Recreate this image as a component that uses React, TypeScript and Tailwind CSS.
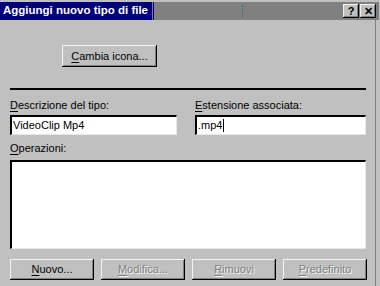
import React from 'react';

const font = { fontFamily: '"Liberation Sans", Arial, sans-serif' };

const raised =
  'bg-[#c0c0c0] shadow-[inset_-1px_-1px_#000,inset_1px_1px_#eef6ee,inset_-2px_-2px_#808080]';

function Btn({
  label,
  hot,
  disabled,
  className = '',
}: {
  label: string;
  hot: number;
  disabled?: boolean;
  className?: string;
}) {
  const before = label.slice(0, hot);
  const key = label[hot];
  const after = label.slice(hot + 1);
  return (
    <div className={`${raised} flex items-center justify-center text-[11px] ${className}`}>
      <span
        className={
          disabled
            ? 'text-[#808080] [text-shadow:1px_1px_0_#f4faf4]'
            : 'text-black'
        }
      >
        {before}
        <span className="underline underline-offset-[2px]">{key}</span>
        {after}
      </span>
    </div>
  );
}

function Label({ text }: { text: string }) {
  return (
    <div className="text-[11px] leading-[13px] text-black">
      <span className="underline underline-offset-[2px]">{text[0]}</span>
      {text.slice(1)}
    </div>
  );
}

export default function App() {
  return (
    <div
      className="w-[380px] h-[286px] bg-[#c0c0c0] flex flex-col overflow-hidden"
      style={font}
    >
      {/* title bar */}
      <div className="pt-[2px] flex pr-[1px]">
        <div className="flex h-[18px] flex-1">
          <div className="bg-[#000080] flex items-center pl-[3px] pr-[3px]">
            <span className="text-white font-bold text-[11.5px] whitespace-nowrap">
              Aggiungi nuovo tipo di file
            </span>
          </div>
          <div className="w-[4px] bg-[repeating-linear-gradient(90deg,#000080_0_1px,#808080_1px_2px)]" />
          <div className="flex-1 bg-[#808080] flex items-center">
            <div className="ml-[87px] h-[12px] border-l border-dotted border-[#008080]" />
            <div className="ml-auto mr-[3px] flex gap-[1px]">
              <div className={`${raised} w-[16px] h-[14px] flex items-center justify-center text-[11px] font-bold leading-none`}>
                ?
              </div>
              <div className={`${raised} w-[16px] h-[14px] flex items-center justify-center text-[11px] font-bold leading-none`}>
                ✕
              </div>
            </div>
          </div>
        </div>
      </div>

      {/* body */}
      <div className="flex flex-1">
        <div className="flex-1 pl-[10px] pr-[8px] flex flex-col">
          <Btn label="Cambia icona..." hot={0} className="mt-[25px] ml-[52px] w-[95px] h-[22px]" />

          <div className="mt-[21px] h-[2px] w-[356px] bg-black" />

          <div className="mt-[9px] flex gap-[18px]">
            <div className="flex flex-col gap-[3px]">
              <Label text="Descrizione del tipo:" />
              <div className="w-[167px] h-[20px] bg-white border-l-2 border-t-2 border-black border-r border-b border-r-[#e2ece2] border-b-[#e2ece2] flex items-center pl-[1px] text-[11px]">
                VideoClip Mp4
              </div>
            </div>
            <div className="flex flex-col gap-[3px]">
              <Label text="Estensione associata:" />
              <div className="w-[171px] h-[20px] bg-white border-l-2 border-t-2 border-black border-r border-b border-r-[#e2ece2] border-b-[#e2ece2] flex items-center pl-[1px] text-[11px]">
                .mp4
                <span className="ml-[1px] w-[1px] h-[13px] bg-black" />
              </div>
            </div>
          </div>

          <div className="mt-[7px]">
            <Label text="Operazioni:" />
          </div>
          <div className="mt-[5px] w-[356px] h-[89px] bg-white border-l-2 border-t-2 border-black border-r border-b border-r-[#e2ece2] border-b-[#e2ece2]" />

          <div className="mt-[10px] flex gap-[7px]">
            <Btn label="Nuovo..." hot={0} className="w-[84px] h-[21px]" />
            <Btn label="Modifica..." hot={0} disabled className="w-[84px] h-[21px]" />
            <Btn label="Rimuovi" hot={0} disabled className="w-[84px] h-[21px]" />
            <Btn label="Predefinito" hot={0} disabled className="w-[84px] h-[21px]" />
          </div>
        </div>
        <div className="w-[1px] bg-[#808080]" />
        <div className="w-[4px]" />
      </div>
    </div>
  );
}
